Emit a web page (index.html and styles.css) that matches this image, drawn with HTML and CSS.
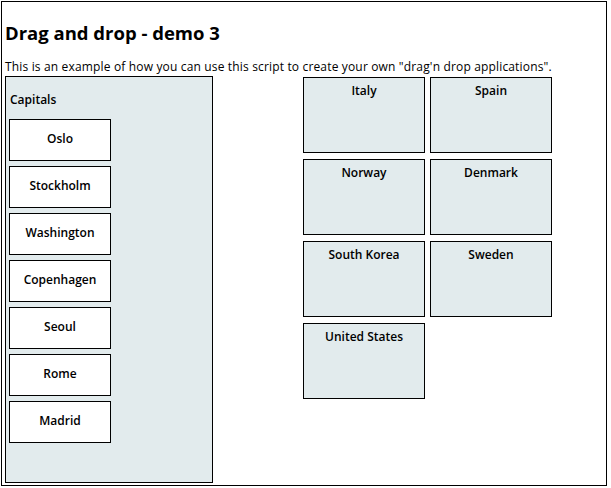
FILE: index.html
```html
<!DOCTYPE html>
<html>
<head>
<meta charset="utf-8">
<link rel="stylesheet" href="styles.css">
</head>
<body>
<div class="page">
  <h1 class="title">Drag and drop - demo 3</h1>
  <p class="intro">This is an example of how you can use this script to create your own "drag'n drop applications".</p>
  <div class="board">
    <div class="capitals">
      <div class="caption">Capitals</div>
      <div class="item">Oslo</div>
      <div class="item">Stockholm</div>
      <div class="item">Washington</div>
      <div class="item">Copenhagen</div>
      <div class="item">Seoul</div>
      <div class="item">Rome</div>
      <div class="item">Madrid</div>
    </div>
    <div class="countries">
      <div class="country">Italy</div>
      <div class="country">Spain</div>
      <div class="country">Norway</div>
      <div class="country">Denmark</div>
      <div class="country">South Korea</div>
      <div class="country">Sweden</div>
      <div class="country">United States</div>
    </div>
  </div>
</div>
</body>
</html>
```
FILE: styles.css
```css
html, body {
  margin: 0;
  padding: 0;
  background: #fff;
}
body {
  font-family: "Open Sans", "DejaVu Sans", sans-serif;
  color: #000;
  font-size: 12px;
}
.page {
  margin: 1px 0 0 1px;
  width: 601px;
  height: 483px;
  padding: 0 0 0 3px;
  border: 1px solid #000;
}
.title {
  margin: 19px 0 0 0;
  font-size: 18.5px;
  line-height: 24px;
  font-weight: bold;
}
.intro {
  margin: 14px 0 0 0;
  line-height: 16px;
  font-size: 12px;
  letter-spacing: 0.16px;
}
.board {
  display: flex;
  align-items: flex-start;
  margin-top: 1px;
  gap: 90px;
}
.capitals {
  width: 203px;
  height: 405px;
  padding: 0 0 0 3px;
  background: #e2ebed;
  border: 1px solid #000;
  display: flex;
  flex-direction: column;
}
.caption {
  margin: 15px 0 11px 1px;
  line-height: 16px;
  font-weight: 600;
}
.item {
  width: 100px;
  height: 37px;
  padding-bottom: 3px;
  margin-bottom: 5px;
  background: #fff;
  border: 1px solid #000;
  display: flex;
  align-items: center;
  justify-content: center;
  font-weight: 600;
}
.countries {
  display: grid;
  grid-template-columns: 122px 122px;
  grid-auto-rows: 76px;
  column-gap: 5px;
  row-gap: 6px;
  margin-top: 1px;
}
.country {
  background: #e2ebed;
  border: 1px solid #000;
  text-align: center;
  font-weight: 600;
  padding-top: 5px;
  line-height: 16px;
}
```
